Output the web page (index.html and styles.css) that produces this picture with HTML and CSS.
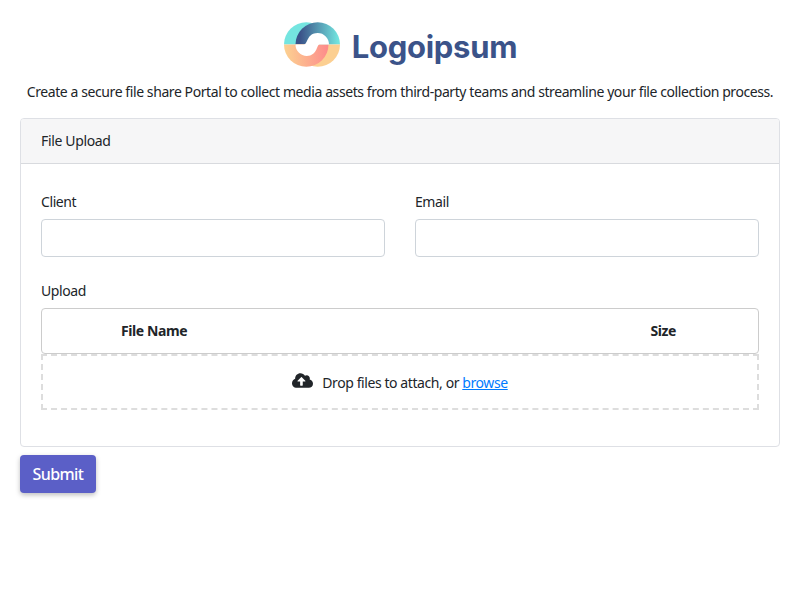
FILE: index.html
```html
<!DOCTYPE html>
<html lang="en">
<head>
<meta charset="utf-8">
<title>File Upload</title>
<link rel="stylesheet" href="styles.css">
</head>
<body>
<header class="brand">
<svg class="brand-mark" viewBox="0 0 56 45" aria-hidden="true">
<defs>
<linearGradient id="sea" x1="12" x2="54" y1="14" y2="14" gradientUnits="userSpaceOnUse"><stop offset=".1" stop-color="#3b5389"/><stop offset="1" stop-color="#72e3de"/></linearGradient>
<linearGradient id="sand" x1="2" x2="44" y1="32" y2="28" gradientUnits="userSpaceOnUse"><stop offset="0" stop-color="#fccf91"/><stop offset="1" stop-color="#fd8b8b"/></linearGradient>
</defs>
<path fill="#74e5e0" d="M0 22.500A22.250 22.250 0 0 1 44.500 22.500Z"/>
<path fill="url(#sea)" d="M11.500 22.500A22.250 22.250 0 0 1 56 22.500Z"/>
<path fill="#fccf91" d="M11.500 22.500A22.250 22.250 0 0 0 56 22.500Z"/>
<path fill="url(#sand)" d="M0 22.500A22.250 22.250 0 0 0 44.500 22.500Z"/>
<path fill="#fff" d="M11.500 22.500H20C24 22.500 22.500 11.100 33.700 11.100A11.300 11.300 0 0 1 45 22.500H35.500C32.500 22.500 33.500 33.900 22.800 33.900A11.300 11.300 0 0 1 11.500 22.500Z"/>
</svg>
<span class="brand-name">Logoipsum</span>
</header>
<p class="intro">Create a secure file share Portal to collect media assets from third-party teams and streamline your file collection process.</p>
<form class="form">
<section class="card">
<div class="card-header">File Upload</div>
<div class="card-body">
<div class="fields">
<div class="field"><label for="client">Client</label><input id="client" type="text"></div>
<div class="field"><label for="email">Email</label><input id="email" type="email"></div>
</div>
<div class="upload-label">Upload</div>
<div class="file-list"><strong>File Name</strong><strong class="size">Size</strong></div>
<div class="dropzone">
<svg class="cloud" viewBox="0 0 640 512" aria-hidden="true"><path fill="currentColor" d="M537.6 226.6c4.1-10.7 6.4-22.400 6.4-34.600 0-53-43-96-96-96-19.700 0-38.100 6-53.300 16.200C367 64.200 315.300 32 256 32c-88.400 0-160 71.600-160 160 0 2.700.1 5.400.2 8.100C40.200 219.800 0 273.200 0 336c0 79.500 64.500 144 144 144h368c70.700 0 128-57.300 128-128 0-61.900-44-113.600-102.400-125.400zM393.400 288H328v112c0 8.800-7.200 16-16 16h-48c-8.800 0-16-7.200-16-16V288h-65.400c-14.300 0-21.400-17.200-11.300-27.300l105.400-105.400c6.200-6.200 16.400-6.200 22.600 0l105.400 105.400c10.100 10.100 2.900 27.300-11.300 27.300z"/></svg>
<span>Drop files to attach, or <a href="#">browse</a></span>
</div>
</div>
</section>
<button class="submit" type="button">Submit</button>
</form>
</body>
</html>
```
FILE: styles.css
```css
* { box-sizing: border-box; }
body { margin: 0; min-height: 100vh; padding: 22px 20px 0; background: #fff; color: #212529; font: 14px/21px "Segoe UI", "Noto Sans", sans-serif; letter-spacing: -.414px; }
.brand { display: flex; justify-content: center; height: 45px; gap: 12px; padding-left: 1px; }
.brand-mark { width: 56px; height: 45px; }
.brand-name { color: #3b5389; font: 700 31px/49px Inter, sans-serif; letter-spacing: -.3px; }
.intro { margin: 14px 0 16px; text-align: center; white-space: nowrap; }
.card { border: 1px solid #dee0e5; border-radius: 4px; height: 329px; }
.card-header { height: 45px; padding: 11px 20px; background: #f6f6f7; border-bottom: 1px solid #d8dade; border-radius: 3px 3px 0 0; letter-spacing: -.35px; }
.card-body { padding: 27px 20px 36px; }
.fields { display: grid; grid-template-columns: 1fr 1fr; gap: 30px; }
.field label { display: block; margin-bottom: 7px; }
.field input { display: block; width: 100%; height: 38px; border: 1px solid #ced4da; border-radius: 4px; padding: 6px 12px; font: inherit; }
.upload-label { margin: 23px 0 7px; }
.file-list { display: flex; align-items: center; height: 46px; padding: 0 82px 2px 79px; border: 1px solid #ccc; border-radius: 4px; justify-content: space-between; }
.dropzone { display: flex; justify-content: center; gap: 9px; height: 56px; padding-top: 16px; border: 2px dashed #ddd; }
.cloud { width: 21px; height: 17px; }
.dropzone a { color: #007bff; text-decoration: underline; }
.submit { display: block; margin-top: 8px; width: 76px; height: 38px; padding: 0; border: 0; border-radius: 4px; background: #5b5fc7; color: #fff; font: 500 16px/38px "Segoe UI", "Noto Sans", sans-serif; letter-spacing: -.6px; box-shadow: 0 2px 5px rgba(0,0,0,.26); }
```
